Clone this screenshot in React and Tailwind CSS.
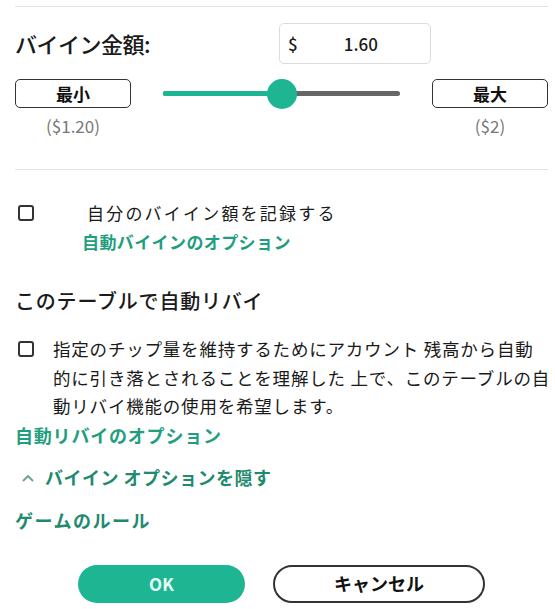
import React from "react";

const FONT = { fontFamily: '"Noto Sans CJK JP", "Noto Sans", sans-serif' };

function Checkbox() {
  return (
    <span className="block w-[16px] h-[16px] shrink-0 border-2 border-[#333] rounded-[3px] bg-white" />
  );
}

function SmallButton({ children }) {
  return (
    <button className="w-[116px] h-[29px] shrink-0 border-[1.5px] border-[#333] rounded-[5px] bg-white text-[17px] font-bold leading-none text-[#111]">
      {children}
    </button>
  );
}

export default function App() {
  return (
    <div
      className="w-[555px] h-[609px] bg-white pl-[15px] pr-[7px] pt-[6px] overflow-hidden text-[#1a1a1a]"
      style={FONT}
    >
      <div className="border-t border-[#e3e3e3]" />

      {/* buy-in amount */}
      <div className="mt-[16px] h-[41px] flex items-center">
        <div className="w-[264px] text-[22px] font-medium tracking-[-0.5px]">バイイン金額:</div>
        <div className="w-[152px] h-[41px] border border-[#dcdcdc] rounded-[5px] flex items-center pl-[8px]">
          <span className="text-[17px] font-medium">$</span>
          <span className="ml-[46px] text-[17px] font-medium">1.60</span>
        </div>
      </div>

      {/* slider */}
      <div className="mt-[15px] h-[29px] flex items-center">
        <SmallButton>最小</SmallButton>
        <div className="flex-1 mx-[32px] relative h-[29px] flex items-center">
          <div className="w-full h-[5px] rounded-full bg-[#666] relative">
            <div className="absolute left-0 top-0 h-[5px] w-1/2 rounded-full bg-[#1db592]" />
          </div>
          <div className="absolute left-1/2 top-1/2 -translate-x-1/2 -translate-y-1/2 w-[30px] h-[30px] rounded-full bg-[#1db592]" />
        </div>
        <SmallButton>最大</SmallButton>
      </div>
      <div className="mt-[9px] flex justify-between text-[17px] leading-[18px] text-[#777]">
        <span className="w-[116px] text-center">($1.20)</span>
        <span className="w-[116px] text-center">($2)</span>
      </div>

      <div className="mt-[34px] border-t border-[#e3e3e3]" />

      {/* record buy-in */}
      <div className="mt-[31px] h-[24px] flex items-center">
        <span className="ml-[3px]"><Checkbox /></span>
        <span className="ml-[53px] text-[17px] tracking-[2.2px] leading-[24px]">自分のバイイン額を記録する</span>
      </div>
      <div className="mt-[5px] ml-[67px] text-[17px] font-bold leading-[24px] tracking-[0.4px] text-[#1f9e80]">
        自動バイインのオプション
      </div>

      {/* auto rebuy */}
      <div className="mt-[33px] text-[20px] font-medium leading-[28px] tracking-[0.8px]">このテーブルで自動リバイ</div>
      <div className="mt-[20px] flex items-start">
        <span className="ml-[3px] mt-[6px]"><Checkbox /></span>
        <p className="ml-[19px] text-[17.5px] leading-[28.5px] tracking-[0.8px] whitespace-nowrap">
          指定のチップ量を維持するためにアカウント 残高から自動
          <br />
          的に引き落とされることを理解した 上で、このテーブルの自
          <br />
          動リバイ機能の使用を希望します。
        </p>
      </div>
      <div className="text-[18px] font-bold leading-[28px] tracking-[0.8px] text-[#1f9e80]">
        自動リバイのオプション
      </div>

      <div className="mt-[15px] h-[28px] flex items-center text-[18px] font-bold text-[#1f8a6f]">
        <svg width="14" height="10" viewBox="0 0 14 10" className="ml-[6px] mr-[10px]">
          <path d="M2 8 L7 3 L12 8" fill="none" stroke="#6a9e8f" strokeWidth="1.8" />
        </svg>
        <span className="tracking-[0.5px]">バイイン オプションを隠す</span>
      </div>

      <div className="mt-[15px] h-[28px] flex items-center text-[18px] font-bold tracking-[1.5px] text-[#1f8a6f]">
        ゲームのルール
      </div>

      {/* actions */}
      <div className="mt-[30px] flex items-center gap-[28px] pl-[63px]">
        <button className="w-[167px] h-[38px] rounded-full bg-[#1db592] text-[#e8fff8] text-[17px] font-bold">
          OK
        </button>
        <button className="w-[212px] h-[38px] rounded-full border-2 border-[#333] bg-white text-[18px] font-bold text-[#111]">
          キャンセル
        </button>
      </div>
    </div>
  );
}
